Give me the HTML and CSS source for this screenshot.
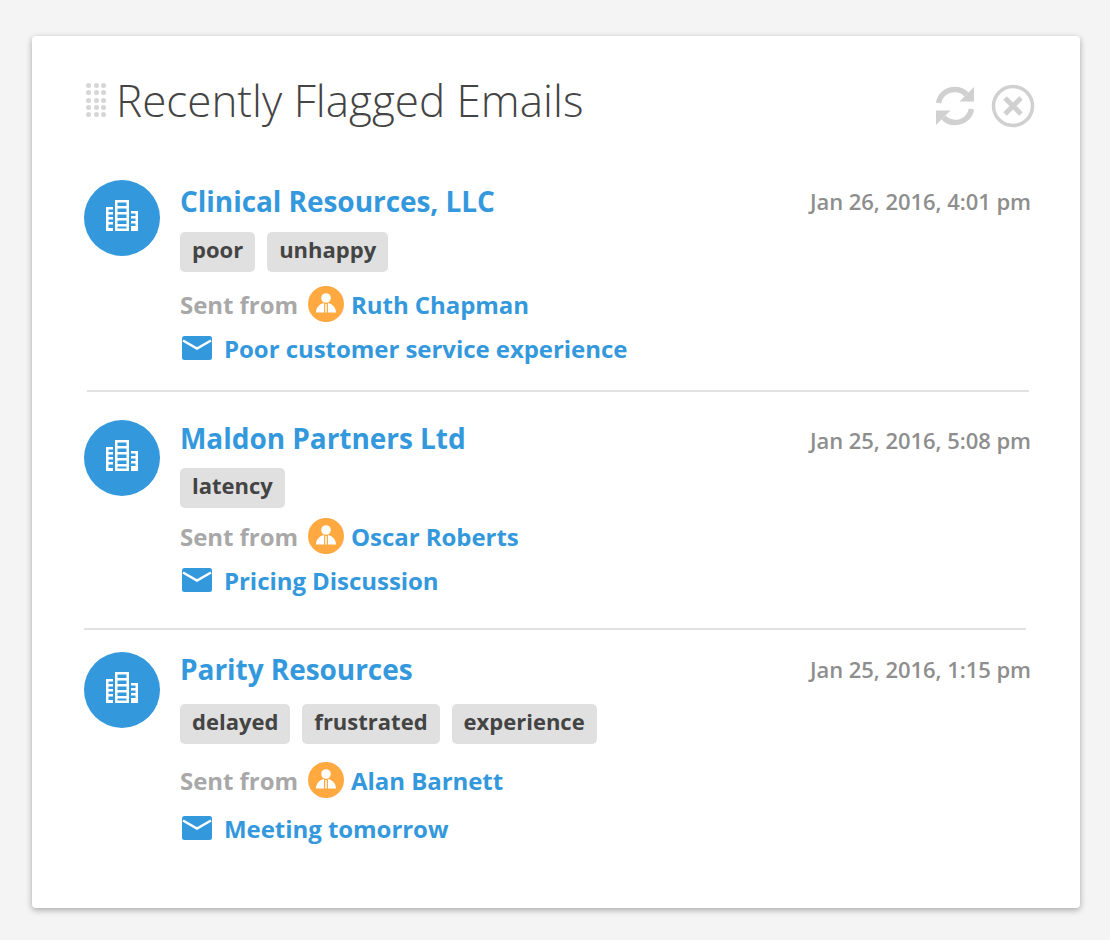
FILE: index.html
```html
<!DOCTYPE html>
<html lang="en">
<head>
<meta charset="utf-8">
<title>Recently Flagged Emails</title>
<link rel="stylesheet" href="styles.css">
</head>
<body>
<svg class="defs" width="0" height="0" aria-hidden="true">
  <defs>
    <symbol id="building" viewBox="0 0 32 32">
      <path fill="#fff" fill-rule="evenodd" d="M9 0h14v31H9zM11.500 2.500v3.500h9V2.500zM11.500 8.500v3.500h9V8.500zM11.500 14.500v3.500h9v-3.500zM11.500 20.500v3.500h9v-3.500zM11.500 26.500v2h9v-2zM0 7h7v24H0zM2.500 9.500v2.500H7V9.500zM2.500 14.500v2.500H7v-2.500zM2.500 19.500v2.500H7v-2.500zM2.500 24.500v3.500H7v-3.500zM25 11h7v20h-7zM25 13.500v2.500h4.500v-2.500zM25 18.500v2.500h4.500v-2.500zM25 23.500v2.500h4.500v-2.500z"/>
    </symbol>
    <symbol id="person" viewBox="0 0 36 36">
      <circle cx="18" cy="18" r="18" fill="#ffa940"/>
      <circle cx="18" cy="12" r="4.800" fill="#fff"/>
      <path fill="#fff" d="M8 26.500c0-4.500 3-8.500 8-9.500v9.500zM28 26.500c0-4.500-3-8.500-8-9.500v9.500z"/>
      <path fill="#fff" d="M17.200 18h1.600v8.500h-1.600z"/>
    </symbol>
    <symbol id="mail" viewBox="0 0 30 24">
      <rect width="30" height="24" rx="2.500" fill="#3498dd"/>
      <path fill="none" stroke="#fff" stroke-width="2.400" d="M1 4.500l14 8 14-8"/>
    </symbol>
  </defs>
</svg>
<main class="card">
  <header class="card-head">
    <div class="grip" aria-hidden="true">
      <i></i><i></i><i></i><i></i><i></i><i></i><i></i><i></i><i></i><i></i><i></i><i></i><i></i><i></i><i></i>
    </div>
    <h1 class="title">Recently Flagged Emails</h1>
    <div class="actions">
      <svg class="icon-refresh" viewBox="0 0 40 40" width="40" height="40" aria-hidden="true">
        <path fill="none" stroke="#d0d0d0" stroke-width="5.500" d="M3.500 17C5 9 11.500 3.500 20 3.500c4.500 0 8.500 1.800 11.500 5"/>
        <path fill="#d0d0d0" d="M39 1v14.500H24.500z"/>
        <path fill="none" stroke="#d0d0d0" stroke-width="5.500" d="M36.500 23C35 31 28.500 36.500 20 36.500c-4.500 0-8.500-1.800-11.500-5"/>
        <path fill="#d0d0d0" d="M1 39V24.500h14.500z"/>
      </svg>
      <svg class="icon-close" viewBox="0 0 44 44" width="44" height="44" aria-hidden="true">
        <circle cx="22" cy="22" r="19.500" fill="none" stroke="#d0d0d0" stroke-width="3.500"/>
        <path fill="none" stroke="#d0d0d0" stroke-width="5" d="M14 14l16 16M30 14L14 30"/>
      </svg>
    </div>
  </header>

  <article class="row row-first">
    <div class="avatar"><svg width="32" height="32"><use href="#building"/></svg></div>
    <div class="body">
      <div class="top">
        <a class="name">Clinical Resources, LLC</a>
        <time class="date">Jan 26, 2016, 4:01 pm</time>
      </div>
      <div class="tags"><span class="tag">poor</span><span class="tag">unhappy</span></div>
      <div class="line sender"><span class="muted">Sent from</span><svg class="person" width="36" height="36"><use href="#person"/></svg><a class="link">Ruth Chapman</a></div>
      <div class="line subject"><svg class="mail" width="30" height="24"><use href="#mail"/></svg><a class="link">Poor customer service experience</a></div>
    </div>
  </article>
  <hr class="rule rule-a">

  <article class="row row-second">
    <div class="avatar"><svg width="32" height="32"><use href="#building"/></svg></div>
    <div class="body">
      <div class="top">
        <a class="name">Maldon Partners Ltd</a>
        <time class="date">Jan 25, 2016, 5:08 pm</time>
      </div>
      <div class="tags"><span class="tag">latency</span></div>
      <div class="line sender"><span class="muted">Sent from</span><svg class="person" width="36" height="36"><use href="#person"/></svg><a class="link">Oscar Roberts</a></div>
      <div class="line subject"><svg class="mail" width="30" height="24"><use href="#mail"/></svg><a class="link">Pricing Discussion</a></div>
    </div>
  </article>
  <hr class="rule rule-b">

  <article class="row row-third">
    <div class="avatar"><svg width="32" height="32"><use href="#building"/></svg></div>
    <div class="body">
      <div class="top">
        <a class="name">Parity Resources</a>
        <time class="date">Jan 25, 2016, 1:15 pm</time>
      </div>
      <div class="tags"><span class="tag">delayed</span><span class="tag">frustrated</span><span class="tag">experience</span></div>
      <div class="line sender"><span class="muted">Sent from</span><svg class="person" width="36" height="36"><use href="#person"/></svg><a class="link">Alan Barnett</a></div>
      <div class="line subject"><svg class="mail" width="30" height="24"><use href="#mail"/></svg><a class="link">Meeting tomorrow</a></div>
    </div>
  </article>
</main>
</body>
</html>
```
FILE: styles.css
```css
* { box-sizing: border-box; }
html, body { height: 100%; }
body {
  margin: 0;
  padding: 36px 30px 0 32px;
  background: #f4f4f4;
  font-family: "Open Sans", sans-serif;
  overflow: hidden;
}
.defs { position: absolute; }
.card {
  height: 872px;
  padding: 0 49px 0 52px;
  background: #fff;
  border-radius: 4px;
  box-shadow: 0 2px 6px rgba(0, 0, 0, .32);
}
.card-head {
  display: flex;
  align-items: flex-start;
  height: 144px;
  padding-top: 34px;
}
.grip {
  display: grid;
  grid-template-columns: repeat(3, 5px);
  grid-auto-rows: 5px;
  gap: 2.300px 2.500px;
  margin: 13px 10px 0 2px;
}
.grip i { background: #d6d6d6; border-radius: 50%; }
.title {
  margin: 0;
  font-size: 44px;
  line-height: 60px;
  font-weight: 300;
  color: #444;
}
.actions {
  margin-left: auto;
  margin-right: -4px;
  display: flex;
  align-items: center;
  gap: 16px;
  padding-top: 14px;
}
.row { display: flex; gap: 20px; }
.avatar {
  flex: none;
  width: 76px;
  height: 76px;
  padding-bottom: 5px;
  border-radius: 50%;
  background: #3498dd;
  display: flex;
  align-items: center;
  justify-content: center;
}
.body { flex: 1; min-width: 0; }
.top {
  display: flex;
  justify-content: space-between;
  align-items: center;
  height: 42px;
}
.name {
  font-size: 28px;
  font-weight: 700;
  letter-spacing: -.05px;
  color: #3498dd;
  line-height: 42px;
}
.date {
  font-size: 22px;
  font-weight: 600;
  letter-spacing: -.05px;
  color: #8e8e8e;
  margin-left: 2px;
}
.tags { display: flex; gap: 12px; margin-top: 10px; }
.tag {
  height: 40px;
  padding: 0 12px;
  border-radius: 5px;
  background: #e0e0e0;
  color: #444;
  font-size: 22px;
  font-weight: 700;
  line-height: 34px;
}
.line { display: flex; align-items: center; font-size: 24px; font-weight: 700; letter-spacing: -.05px; }
.sender { height: 36px; margin-top: 14px; }
.subject { height: 30px; margin-top: 11px; padding-left: 2px; }
.muted { color: #a8a8a8; }
.person { margin: 0 7px 0 10px; flex: none; }
.mail { margin-right: 12px; flex: none; }
.link { color: #3498dd; }
.rule {
  margin: 0;
  border: 0;
  height: 2px;
  background: #e2e2e2;
}
.rule-a { margin: 27px 3px 28px 3px; width: 942px; }
.rule-b { margin: 33px 0 22px 0; width: 942px; }
.row-second .top { margin-top: -4px; height: 44px; }
.row-second .date { padding-top: 3px; }
.row-second .tags { margin-top: 8px; }
.row-second .sender { margin-top: 10px; }
.row-third .top { height: 34px; }
.row-third .tags { margin-top: 18px; }
.row-third .sender { margin-top: 18px; }
.row-third .subject { margin-top: 15px; }
```
